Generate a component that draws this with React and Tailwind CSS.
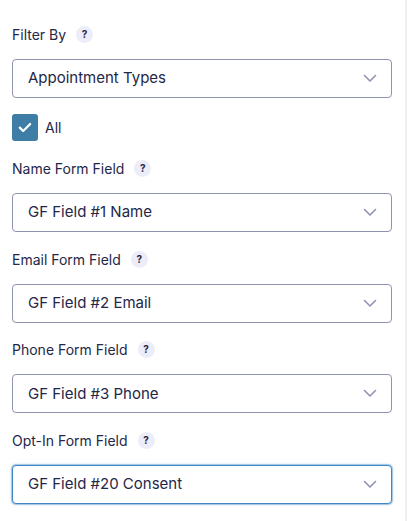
import React from "react";

const Help = () => (
  <span className="ml-[10px] inline-flex items-center justify-center w-[17px] h-[17px] rounded-full bg-[#ecedf8] text-[10px] font-bold text-[#242748]">
    ?
  </span>
);

const Chevron = () => (
  <svg width="14" height="9" viewBox="0 0 14 9" fill="none" className="shrink-0">
    <path d="M1.5 1.5 L7 7 L12.5 1.5" stroke="#9092b2" strokeWidth="1.6" strokeLinecap="round" strokeLinejoin="round" />
  </svg>
);

const Select = ({ value, focused }) => (
  <div
    className={`h-[39px] flex items-center justify-between pl-[15px] pr-[14px] rounded-[4px] bg-white border ${
      focused
        ? "border-[#3f88c5] shadow-[0_0_0_1px_rgba(63,136,197,0.3),0_0_3px_rgba(63,136,197,0.6)]"
        : "border-[#9092b2]"
    }`}
  >
    <span className="text-[15px] text-[#242748]">{value}</span>
    <Chevron />
  </div>
);

const Field = ({ label, value, focused }) => (
  <div>
    <div className="flex items-center h-[17px] text-[14px] text-[#242748]">
      {label}
      <Help />
    </div>
    <div className="mt-[16px]">
      <Select value={value} focused={focused} />
    </div>
  </div>
);

export default function App() {
  return (
    <div className="w-[408px] h-[521px] bg-white flex" style={{ fontFamily: "Inter, 'Noto Sans', sans-serif" }}>
      <div className="w-[392px] pl-[12px] pt-[26px]">
        <Field label="Filter By" value="Appointment Types" />

        <div className="flex items-center mt-[16px]">
          <div className="w-[26px] h-[27px] rounded-[3px] bg-[#3e7da6] flex items-center justify-center">
            <svg width="14" height="11" viewBox="0 0 14 11" fill="none">
              <path d="M1.8 5.6 L5.2 9 L12.2 2" stroke="white" strokeWidth="2.2" strokeLinecap="round" strokeLinejoin="round" />
            </svg>
          </div>
          <span className="ml-[7px] text-[14px] text-[#242748]">All</span>
        </div>

        <div className="mt-[19px] flex flex-col gap-[18.7px]">
          <Field label="Name Form Field" value="GF Field #1 Name" />
          <Field label="Email Form Field" value="GF Field #2 Email" />
          <Field label="Phone Form Field" value="GF Field #3 Phone" />
          <Field label="Opt-In Form Field" value="GF Field #20 Consent" focused />
        </div>
      </div>
      <div className="ml-[13px] w-[2px] h-full bg-[#f0f0f1]" />
    </div>
  );
}
